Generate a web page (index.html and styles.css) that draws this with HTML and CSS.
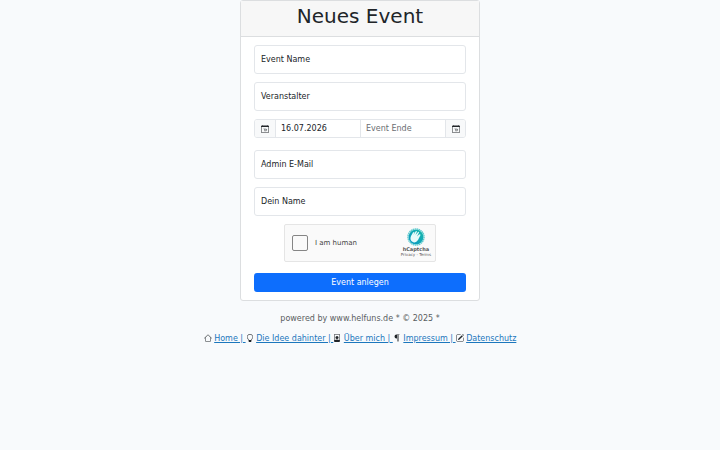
FILE: index.html
```html
<!DOCTYPE html>
<html lang="de">
<head>
<meta charset="utf-8">
<meta name="viewport" content="width=device-width, initial-scale=1">
<title>Neues Event</title>
<link rel="stylesheet" href="styles.css">
</head>
<body>
<svg class="sprite" aria-hidden="true">
  <symbol id="calendar" viewBox="0 0 16 16">
    <path fill-rule="evenodd" d="M3.5 0a.5.5 0 0 1 .5.5V1h8V.5a.5.5 0 0 1 1 0V1h1a2 2 0 0 1 2 2v11a2 2 0 0 1-2 2H2a2 2 0 0 1-2-2V3a2 2 0 0 1 2-2h1V.5a.5.5 0 0 1 .5-.5M1 4v10a1 1 0 0 0 1 1h12a1 1 0 0 0 1-1V4z"/>
    <path d="M5 7.5h2v5M8.5 12q2.500 1 2.500-2.500 0-2-1.300-2T8.400 9t1.300 1.500T11 9" fill="none" stroke="currentColor" stroke-width=".8"/>
  </symbol>
</svg>
<main>
  <form class="card">
    <header class="card-header"><h1>Neues Event</h1></header>
    <div class="card-body">
      <div class="field"><input id="event" type="text"><label for="event">Event Name</label></div>
      <div class="field"><input id="organizer" type="text"><label for="organizer">Veranstalter</label></div>
      <div class="dates">
        <label for="start" aria-label="Event Beginn"><svg class="icon"><use href="#calendar"/></svg></label>
        <input id="start" type="text" value="16.07.2026">
        <input id="end" type="text" placeholder="Event Ende">
        <label for="end" aria-label="Event Ende"><svg class="icon"><use href="#calendar"/></svg></label>
      </div>
      <div class="field"><input id="email" type="email"><label for="email">Admin E-Mail</label></div>
      <div class="field"><input id="name" type="text"><label for="name">Dein Name</label></div>
      <div class="captcha">
        <input id="human" type="checkbox"><label for="human">I am human</label>
        <div class="captcha-brand">
          <svg class="captcha-logo" viewBox="0 0 36 36" aria-hidden="true">
            <defs><linearGradient id="teal" x1="0" y1="1" x2="1" y2="0"><stop stop-color="#0a95c4"/><stop offset="1" stop-color="#18b9aa"/></linearGradient></defs>
            <circle cx="18" cy="18" r="15" fill="url(#teal)"/>
            <circle cx="18" cy="18" r="16" fill="none" stroke="#5ecace" stroke-width="3" stroke-dasharray="3 1"/>
            <path d="M8 16l4-7q2-2 3 0l-2 5 4-7q2-2 3 0l-3 7 5-6q2-1 2 1l-4 8 4-4q3-1 3 1l-5 10q-5 8-12 3-5-4-2-11z" fill="#e8fafa"/>
          </svg>
          <strong>hCaptcha</strong>
          <span><a href="#privacy">Privacy</a> - <a href="#terms">Terms</a></span>
        </div>
      </div>
      <button type="submit">Event anlegen</button>
    </div>
  </form>
</main>
<footer>
  <p>powered by www.helfuns.de * © 2025 *</p>
  <nav>
    <svg class="icon" viewBox="0 0 16 16"><path d="M8.707 1.500a1 1 0 0 0-1.414 0L.646 8.146a.5.5 0 0 0 .708.708L2 8.207V13.500A1.500 1.500 0 0 0 3.500 15h9a1.500 1.500 0 0 0 1.500-1.500V8.207l.646.647a.5.5 0 0 0 .708-.708zM13 7.207V13.500a.5.5 0 0 1-.5.5h-9a.5.5 0 0 1-.5-.5V7.207l5-5z"/></svg>
    <a href="#home">Home | </a>
    <svg class="icon" viewBox="0 0 16 16"><path d="M2 6a6 6 0 1 1 10.174 4.310c-.203.196-.359.400-.453.619l-.762 1.769A.5.5 0 0 1 10.500 13a.5.5 0 0 1 0 1 .5.5 0 0 1 0 1l-.224.447a1 1 0 0 1-.894.553H6.618a1 1 0 0 1-.894-.553L5.500 15a.5.5 0 0 1 0-1 .5.5 0 0 1 0-1 .5.5 0 0 1-.460-.302l-.761-1.770a2 2 0 0 0-.453-.618A6 6 0 0 1 2 6m6-5a5 5 0 0 0-3.479 8.592c.263.254.514.564.676.941L5.830 12h4.342l.632-1.467c.162-.377.413-.687.676-.941A5 5 0 0 0 8 1"/></svg>
    <a href="#idee">Die Idee dahinter | </a>
    <svg class="icon" viewBox="0 0 16 16"><path d="M12 1a1 1 0 0 1 1 1v10.755S12 11 8 11s-5 1.755-5 1.755V2a1 1 0 0 1 1-1zM4 0a2 2 0 0 0-2 2v12a2 2 0 0 0 2 2h8a2 2 0 0 0 2-2V2a2 2 0 0 0-2-2z" fill-rule="evenodd"/><path d="M8 10a3 3 0 1 0 0-6 3 3 0 0 0 0 6"/></svg>
    <a href="#ueber">Über mich | </a>
    <svg class="icon" viewBox="0 0 16 16"><path d="M10.500 15a.5.5 0 0 1-.5-.5V2H9v12.500a.5.5 0 0 1-1 0V9H7a4 4 0 1 1 0-8h5.500a.5.5 0 0 1 0 1H11v12.500a.5.5 0 0 1-.5.5"/></svg>
    <a href="#impressum">Impressum | </a>
    <svg class="icon" viewBox="0 0 16 16"><path d="M15.502 1.940a.5.5 0 0 1 0 .706L14.459 3.690l-2-2L13.502.646a.5.5 0 0 1 .707 0zM13.752 4.396l-2-2L4.939 9.210a.5.5 0 0 0-.121.196l-.805 2.414a.25.25 0 0 0 .316.316l2.414-.805a.5.5 0 0 0 .196-.120z"/><path d="M1 13.500A1.500 1.500 0 0 0 2.500 15h11a1.500 1.500 0 0 0 1.500-1.500v-6a.5.5 0 0 0-1 0v6a.5.5 0 0 1-.5.5h-11a.5.5 0 0 1-.5-.5v-11a.5.5 0 0 1 .5-.5H9a.5.5 0 0 0 0-1H2.500A1.500 1.500 0 0 0 1 2.500z"/></svg>
    <a href="#datenschutz">Datenschutz</a>
  </nav>
</footer>
</body>
</html>
```
FILE: styles.css
```css
* { box-sizing: border-box; }

body {
  margin: 0;
  background: #f8fafc;
  color: #212529;
  font: 8px/12px "DejaVu Sans", sans-serif;
}

input, button { font: inherit; color: inherit; }

.sprite { position: absolute; width: 0; height: 0; }

.icon { width: 8px; height: 8px; fill: currentColor; }

.card {
  width: 100%;
  max-width: 240px;
  margin: 0 auto;
  background: #fff;
  border: 1px solid #dcdee0;
  border-radius: 3px;
}

.card-header {
  padding: 4px 8px 8px;
  background: #f7f7f7;
  border-bottom: 1px solid #dcdee0;
  text-align: center;
}

h1 { margin: 0; font-size: 20px; line-height: 23px; font-weight: 400; }

.card-body {
  display: flex;
  flex-direction: column;
  gap: 8px;
  padding: 8px 13px;
}

.field { position: relative; height: 29px; }

.field input {
  width: 100%;
  height: 100%;
  padding: 8px 6px;
  background: #fff;
  border: 1px solid #e3e6ea;
  border-radius: 3px;
}

.field label { position: absolute; left: 7px; top: 9px; }

.dates {
  display: flex;
  height: 19px;
  margin-bottom: 4px;
  border: 1px solid #e3e6ea;
  border-radius: 3px;
  overflow: hidden;
}

.dates label {
  display: flex;
  align-items: center;
  justify-content: center;
  flex: 0 0 20px;
  background: #f8f9fa;
}

.dates input {
  flex: 1;
  min-width: 0;
  padding: 0 5px;
  background: #fff;
  border: 0;
  border-left: 1px solid #e3e6ea;
}

.dates input + label { border-left: 1px solid #e3e6ea; }
.dates input::placeholder { color: #6a6e72; opacity: 1; }

.captcha {
  display: flex;
  align-items: center;
  align-self: center;
  width: 152px;
  height: 38px;
  padding: 0 4px 0 7px;
  margin-bottom: 3px;
  background: #fafafa;
  border: 1px solid #e5e5e5;
  border-radius: 2px;
}

.captcha input {
  appearance: none;
  width: 16px;
  height: 16px;
  margin: 0 7px 0 0;
  background: #fafafa;
  border: 1px solid #858585;
  border-radius: 2px;
}

.captcha > label { font-size: 7px; color: #444; }

.captcha-brand {
  display: flex;
  flex-direction: column;
  align-items: center;
  margin-left: auto;
  color: #555;
  font-size: 4px;
  line-height: 6px;
}

.captcha-logo { width: 18px; height: 18px; }
.captcha-brand strong { font-size: 5px; }
.captcha-brand a { color: inherit; text-decoration: none; }

button {
  height: 19px;
  padding: 0;
  background: #0d6efd;
  color: #fff;
  border: 0;
  border-radius: 3px;
}

footer { padding: 12px 8px; color: #595d61; text-align: center; }
footer p { margin: 0 0 8px; }
nav a { color: #1c77bd; }
nav .icon { color: #212529; vertical-align: -1px; }
```
